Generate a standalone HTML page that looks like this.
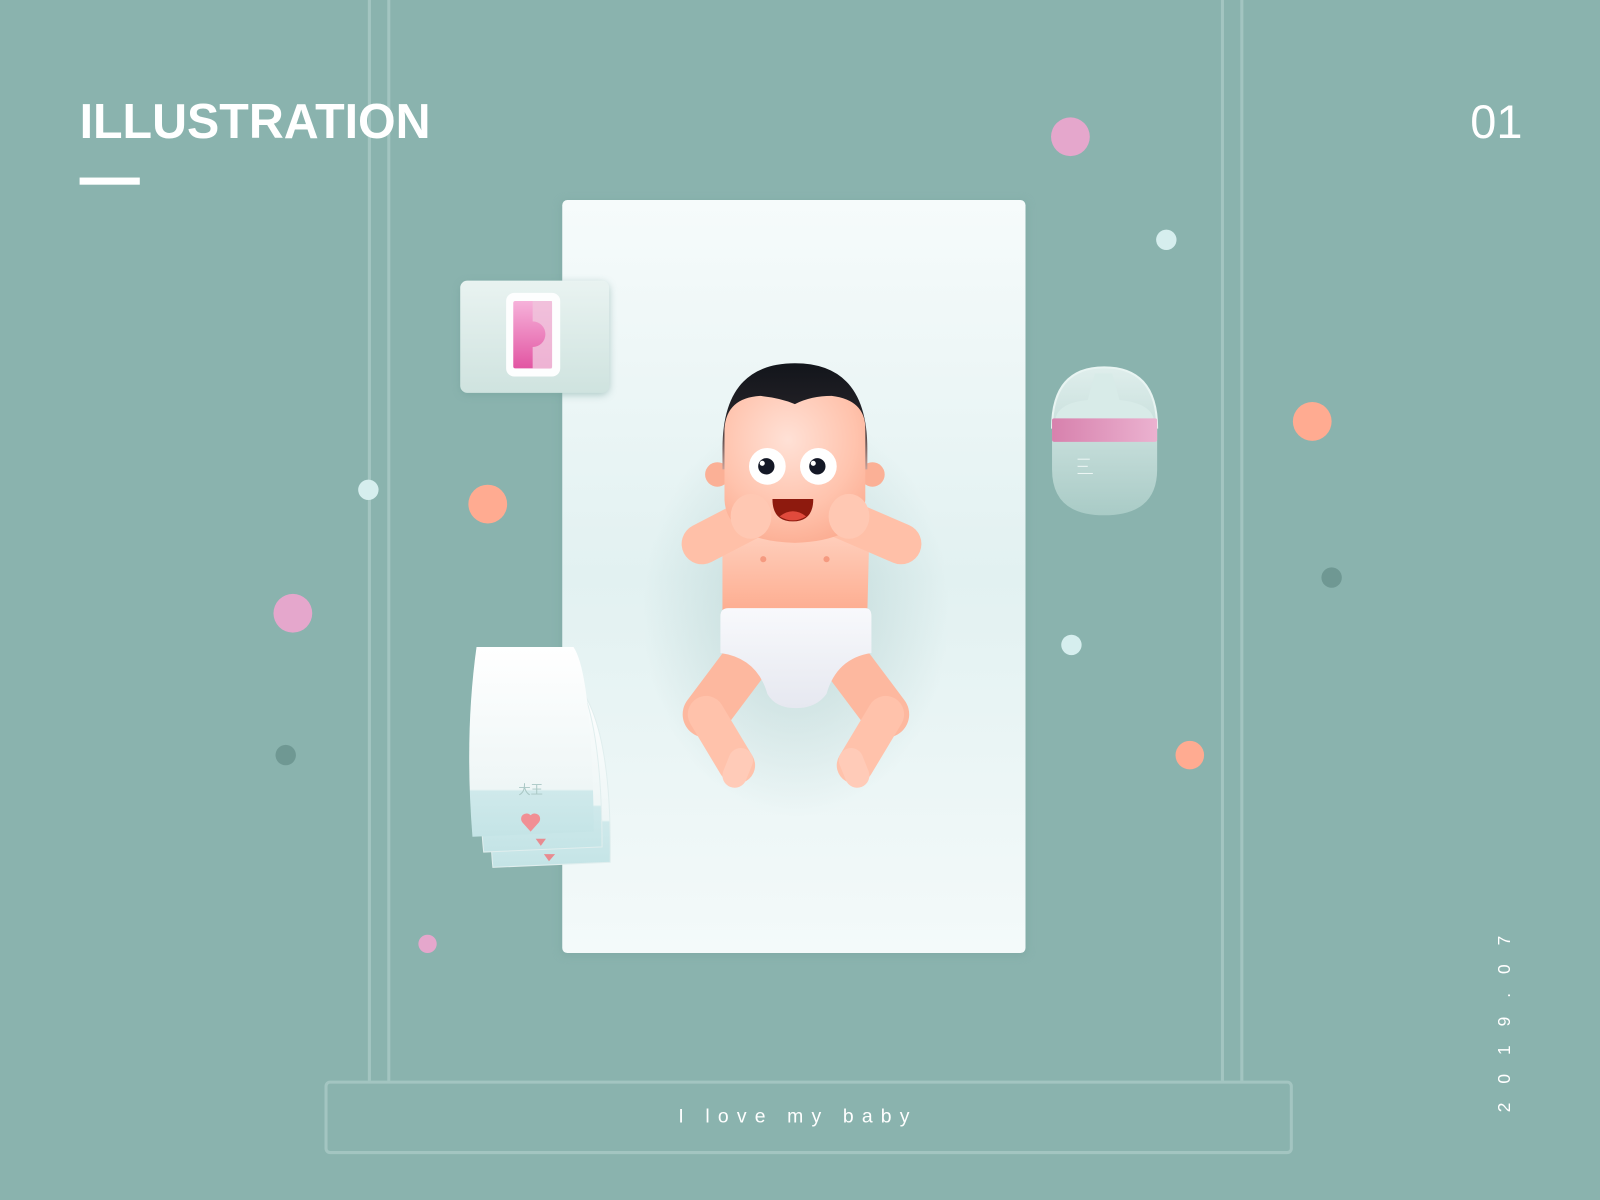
<!DOCTYPE html>
<html><head><meta charset="utf-8"><style>
html,body{margin:0;padding:0;width:1600px;height:1200px;overflow:hidden;background:#8ab3ae}
svg{display:block}
</style></head><body>
<svg width="1600" height="1200" viewBox="0 0 1568 1176" xmlns="http://www.w3.org/2000/svg" font-family="Liberation Sans, sans-serif">
<defs>
<linearGradient id="mat" x1="0" y1="0" x2="0" y2="1"><stop offset="0" stop-color="#f6fbfb"/><stop offset="0.5" stop-color="#e2f1f1"/><stop offset="1" stop-color="#f4fafa"/></linearGradient>
<radialGradient id="sh" cx="0.5" cy="0.5" r="0.5"><stop offset="0" stop-color="#9fc2c1" stop-opacity="0.55"/><stop offset="1" stop-color="#9fc2c1" stop-opacity="0"/></radialGradient>
<radialGradient id="skin" cx="0.45" cy="0.3" r="0.8"><stop offset="0" stop-color="#ffe1d6"/><stop offset="0.6" stop-color="#ffc3ad"/><stop offset="1" stop-color="#fba88c"/></radialGradient>
<linearGradient id="torso" x1="0" y1="0" x2="0" y2="1"><stop offset="0" stop-color="#ffd0be"/><stop offset="1" stop-color="#fdad90"/></linearGradient>
<linearGradient id="hair" x1="0" y1="0" x2="0" y2="1"><stop offset="0" stop-color="#12151b"/><stop offset="0.55" stop-color="#262328"/><stop offset="1" stop-color="#c8a199"/></linearGradient>
<linearGradient id="dia" x1="0" y1="0" x2="0" y2="1"><stop offset="0" stop-color="#f8f9fc"/><stop offset="1" stop-color="#e6e8f0"/></linearGradient>
<linearGradient id="box" x1="0" y1="0" x2="0" y2="1"><stop offset="0" stop-color="#e9f3f1"/><stop offset="1" stop-color="#cfe3df"/></linearGradient>
<linearGradient id="pink" x1="0" y1="0" x2="0" y2="1"><stop offset="0" stop-color="#f6b2da"/><stop offset="1" stop-color="#e255a2"/></linearGradient>
<linearGradient id="bot" x1="0" y1="0" x2="0" y2="1"><stop offset="0" stop-color="#dfeeec"/><stop offset="1" stop-color="#a9cbc6"/></linearGradient>
<linearGradient id="band" x1="0" y1="0" x2="1" y2="0"><stop offset="0" stop-color="#d781ad"/><stop offset="1" stop-color="#ebb2d0"/></linearGradient>
<linearGradient id="nap" x1="0" y1="0" x2="0" y2="1"><stop offset="0" stop-color="#ffffff"/><stop offset="0.75" stop-color="#eef6f6"/><stop offset="0.76" stop-color="#cfe9eb"/><stop offset="1" stop-color="#c4e4e6"/></linearGradient>
<filter id="blur" x="-20%" y="-20%" width="140%" height="140%"><feGaussianBlur stdDeviation="4"/></filter>
</defs>
<g stroke="#a3c5c1" stroke-width="3">
<line x1="362" y1="0" x2="362" y2="1060"/><line x1="381" y1="0" x2="381" y2="1060"/>
<line x1="1198" y1="0" x2="1198" y2="1060"/><line x1="1217" y1="0" x2="1217" y2="1060"/>
</g>
<text x="78" y="135" fill="#fff" font-size="48" font-weight="bold" textLength="344" lengthAdjust="spacingAndGlyphs">ILLUSTRATION</text>
<rect x="78" y="174" width="59" height="7" fill="#fff"/>
<text x="1492" y="135" fill="#fff" font-size="46" text-anchor="end">01</text>
<text transform="translate(1480,1090) rotate(-90)" fill="#fff" font-size="17" textLength="193" letter-spacing="20">2019.07</text>
<circle cx="1049" cy="134" r="19" fill="#e5a7cc"/>
<circle cx="1143" cy="235" r="10" fill="#d6eeee"/>
<circle cx="1286" cy="413" r="19" fill="#ffab91"/>
<circle cx="1305" cy="566" r="10" fill="#6f9893"/>
<circle cx="361" cy="480" r="10" fill="#d6eeee"/>
<circle cx="478" cy="494" r="19" fill="#ffab91"/>
<circle cx="287" cy="601" r="19" fill="#e5a7cc"/>
<circle cx="280" cy="740" r="10" fill="#6f9893"/>
<circle cx="419" cy="925" r="9" fill="#e5a7cc"/>
<circle cx="1050" cy="632" r="10" fill="#d6eeee"/>
<circle cx="1166" cy="740" r="14" fill="#ffab91"/>
<rect x="549" y="196" width="458" height="741" rx="6" fill="#7aa4a0" opacity="0.5" filter="url(#blur)"/>
<rect x="551" y="196" width="454" height="738" rx="5" fill="url(#mat)"/>
<rect x="451" y="277" width="146" height="110" rx="8" fill="#6f9c97" opacity="0.5" filter="url(#blur)"/>
<rect x="451" y="275" width="146" height="110" rx="7" fill="url(#box)"/>
<rect x="496" y="287" width="53" height="82" rx="8" fill="#fdfefe"/>
<rect x="503" y="295" width="38" height="66" rx="2" fill="url(#pink)"/>
<path d="M522 295 L522 315 A12 12 0 0 1 522 340 L522 361 L541 361 L541 295Z" fill="#f0c3dc" opacity="0.85"/>
<path d="M1031 435 L1031 420 Q1031 360 1082 360 Q1134 360 1134 420 L1134 460 Q1134 505 1082 505 Q1031 505 1031 460Z" fill="url(#bot)"/>
<path d="M1034 412 Q1036 395 1066 392 L1073 366 L1090 366 L1097 392 Q1128 395 1131 412Z" fill="#d8ebe8"/>
<path d="M1031 420 Q1031 360 1082 360 Q1134 360 1134 420" fill="none" stroke="#e8f4f2" stroke-width="2"/>
<rect x="1031" y="410" width="103" height="23" rx="2" fill="url(#band)"/>
<g stroke="#eef7f6" stroke-width="1"><line x1="1056" y1="450" x2="1068" y2="450"/><line x1="1056" y1="457" x2="1066" y2="457"/><line x1="1056" y1="464" x2="1071" y2="464"/></g>
<g>
<path d="M482 665 L560 665 Q600 700 598 845 L483 850 Q478 800 482 665Z" fill="url(#nap)" stroke="#e0eeee"/>
<path d="M472 650 L557 650 Q590 690 590 830 L474 835 Q468 780 472 650Z" fill="url(#nap)" stroke="#e0eeee"/>
<path d="M467 634 L562 634 Q580 660 582 815 L463 820 Q455 720 467 634Z" fill="url(#nap)"/>
<text x="520" y="778" fill="#a9c7c4" font-size="12" text-anchor="middle" font-family="Liberation Sans, Noto Sans CJK SC, sans-serif">大王</text>
<path d="M520 815 L512 806 A5 5 0 0 1 520 799 A5 5 0 0 1 528 806Z" fill="#f18f94"/>
<path d="M525 822 L535 822 L530 829Z" fill="#e88b90"/>
<path d="M533 837 L544 837 L538 844Z" fill="#e88b90"/>
</g>
<ellipse cx="780" cy="600" rx="150" ry="200" fill="url(#sh)"/>
<g stroke-linecap="round" stroke-linejoin="round" fill="none">
<path d="M728 652 L692 700" stroke="#fdb89f" stroke-width="46"/>
<path d="M832 652 L868 700" stroke="#fdb89f" stroke-width="46"/>
<path d="M692 700 L722 750" stroke="#ffc2ab" stroke-width="36"/>
<path d="M868 700 L838 750" stroke="#ffc2ab" stroke-width="36"/>
<path d="M726 745 L720 760" stroke="#ffcbb8" stroke-width="24"/>
<path d="M834 745 L840 760" stroke="#ffcbb8" stroke-width="24"/>
</g>
<path d="M708 520 L852 520 L850 600 L708 600Z" fill="url(#torso)"/>
<circle cx="748" cy="548" r="3" fill="#f59a80"/><circle cx="810" cy="548" r="3" fill="#f59a80"/>
<g stroke-linecap="round" fill="none">
<path d="M742 505 L688 533" stroke="#ffc0a8" stroke-width="40"/>
<path d="M818 505 L883 533" stroke="#ffc0a8" stroke-width="40"/>
</g>
<path d="M706 604 Q706 596 714 596 L848 596 Q854 596 854 604 L854 640 Q820 645 810 680 Q800 694 780 694 Q760 694 752 680 Q742 645 706 640Z" fill="url(#dia)"/>
<circle cx="703" cy="465" r="12" fill="#fbb096"/><circle cx="855" cy="465" r="12" fill="#fbb096"/>
<path d="M708 440 Q708 356 779 356 Q850 356 850 440 L850 460 L708 460Z" fill="url(#hair)"/>
<path d="M710 420 Q712 390 745 388 Q765 390 779 396 Q795 388 815 388 Q848 392 848 420 L848 490 Q845 530 779 532 Q712 530 710 490Z" fill="url(#skin)"/>
<circle cx="752" cy="457" r="18" fill="#fff"/><circle cx="802" cy="457" r="18" fill="#fff"/>
<circle cx="751" cy="457" r="8" fill="#141826"/><circle cx="801" cy="457" r="8" fill="#141826"/>
<circle cx="747" cy="454" r="2.5" fill="#fff"/><circle cx="797" cy="454" r="2.5" fill="#fff"/>
<path d="M757 489 L797 489 Q797 511 777 511 Q757 511 757 489Z" fill="#8e1a0e"/>
<path d="M764 506 Q777 496 790 506 Q777 514 764 506Z" fill="#e14a3c"/>
<ellipse cx="736" cy="506" rx="20" ry="22" fill="#ffc8b3"/>
<ellipse cx="832" cy="506" rx="20" ry="22" fill="#ffc8b3"/>
<rect x="319.5" y="1060.5" width="946" height="69" rx="4" fill="none" stroke="#a3c5c1" stroke-width="3"/>
<text x="782" y="1100" fill="#fff" font-size="19" text-anchor="middle" letter-spacing="8">I love my baby</text>
</svg>
</body></html>
